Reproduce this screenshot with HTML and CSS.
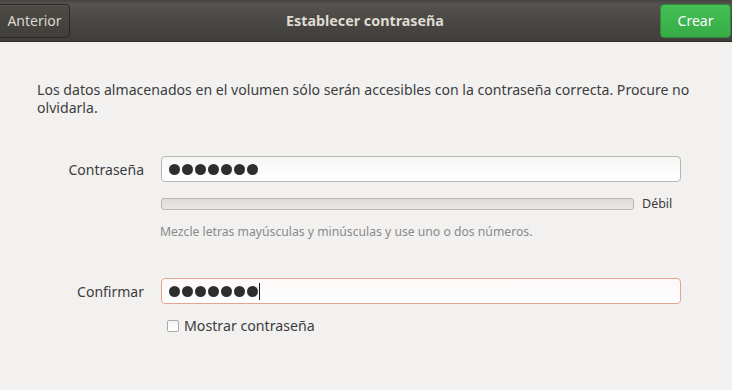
FILE: index.html
```html
<!DOCTYPE html>
<html lang="es">
<head>
<meta charset="utf-8">
<title>Establecer contraseña</title>
<link rel="stylesheet" href="styles.css">
</head>
<body>
<div class="dialog">
  <header class="headerbar">
    <button class="btn btn-back">Anterior</button>
    <div class="title">Establecer contraseña</div>
    <button class="btn btn-create">Crear</button>
  </header>
  <main class="content">
    <p class="intro">Los datos almacenados en el volumen sólo serán accesibles con la contraseña correcta. Procure no olvidarla.</p>
    <div class="form">
      <div class="row">
        <label class="label">Contraseña</label>
        <div class="entry"><span class="dots"><i></i><i></i><i></i><i></i><i></i><i></i><i></i></span></div>
      </div>
      <div class="row row-strength">
        <div class="spacer"></div>
        <div class="strength"><div class="bar"></div><span class="strength-text">Débil</span></div>
      </div>
      <div class="row row-hint">
        <div class="spacer"></div>
        <div class="hint">Mezcle letras mayúsculas y minúsculas y use uno o dos números.</div>
      </div>
      <div class="row row-confirm">
        <label class="label">Confirmar</label>
        <div class="entry entry-error"><span class="dots"><i></i><i></i><i></i><i></i><i></i><i></i><i></i></span><span class="caret"></span></div>
      </div>
      <div class="row row-check">
        <div class="spacer"></div>
        <label class="check"><span class="box"></span>Mostrar contraseña</label>
      </div>
    </div>
  </main>
</div>
</body>
</html>
```
FILE: styles.css
```css
* { box-sizing: border-box; }
html, body { margin: 0; padding: 0; }
body {
  width: 732px;
  height: 390px;
  overflow: hidden;
  background: #f2f1f0;
  font-family: "Noto Sans", "DejaVu Sans", sans-serif;
  color: #3c3c3c;
}
.headerbar {
  height: 42px;
  display: flex;
  align-items: center;
  justify-content: space-between;
  background: linear-gradient(#45433f 0px, #55534e 4px, #4a4844 20px, #3f3e3a 41px);
  border-bottom: 1px solid #2c2b28;
  padding: 0 1px 0 0;
}
.btn {
  font-family: inherit;
  font-size: 14px;
  height: 34px;
  border-radius: 4px;
  padding: 0;
  cursor: default;
}
.btn-back {
  width: 74px;
  margin-left: -4px;
  padding-left: 3px;
  color: #dcd8cf;
  border: 1px solid #2a2926;
  background: linear-gradient(#4d4b46, #403f3b);
  box-shadow: inset 0 1px rgba(255,255,255,0.06);
}
.title {
  font-weight: bold;
  font-size: 14.3px;
  color: #dfdbd2;
  margin-left: 0;
}
.btn-create {
  width: 71px;
  color: #ffffff;
  border: 1px solid #2f8c3c;
  background: linear-gradient(#45c055, #36ab46);
}
.content {
  padding: 39px 0 0 37px;
}
.intro {
  margin: 0;
  font-size: 14.1px;
  line-height: 18px;
  width: 680px;
  color: #3d3d3d;
}
.form {
  margin-top: 39px;
  display: flex;
  flex-direction: column;
}
.row {
  display: flex;
  align-items: center;
}
.label, .spacer {
  width: 107px;
  margin-right: 17px;
  text-align: right;
  font-size: 14px;
  color: #3c3c3c;
  flex: none;
}
.entry {
  width: 520px;
  height: 26px;
  border: 1px solid #b7b6b2;
  border-radius: 4px;
  background: linear-gradient(#f6f6f5, #ffffff);
  display: flex;
  align-items: center;
  padding-left: 7px;
}
.entry-error {
  border-color: #e3a591;
  background: linear-gradient(#fbf8f7, #ffffff);
}
.dots { display: flex; gap: 2px; }
.dots i {
  width: 11px;
  height: 11px;
  border-radius: 50%;
  background: #2e2e2e;
  display: block;
}
.caret {
  width: 1px;
  height: 17px;
  background: #1a1a1a;
  margin-left: 1px;
}
.row-strength { margin-top: 13px; }
.strength { display: flex; align-items: center; }
.bar {
  width: 473px;
  height: 12px;
  border: 1px solid #b9b8b4;
  border-radius: 3px;
  background: linear-gradient(#dcdbd8, #e8e7e5);
}
.strength-text {
  margin-left: 8px;
  font-size: 12.5px;
  color: #3c3c3c;
}
.row-hint { margin-top: 11px; }
.hint {
  font-size: 12.2px;
  color: #888a8b;
  margin-left: -1px;
}
.row-confirm { margin-top: 38px; }
.row-check { margin-top: 12px; }
.check {
  display: flex;
  align-items: center;
  font-size: 14.2px;
  color: #3c3c3c;
  margin-left: 6px;
}
.box {
  width: 12px;
  height: 12px;
  border: 1px solid #a9a8a4;
  border-radius: 2px;
  background: linear-gradient(#f4f4f3, #ffffff);
  margin-right: 5px;
}
```
